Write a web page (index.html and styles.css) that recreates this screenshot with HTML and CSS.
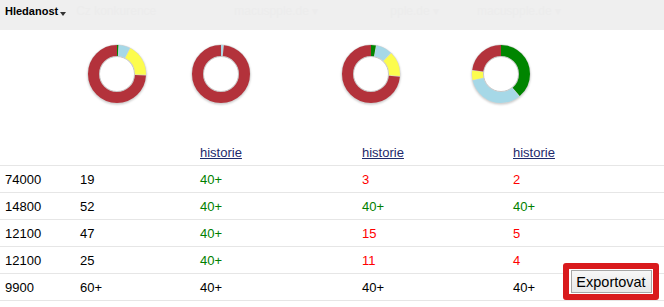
FILE: index.html
```html
<!DOCTYPE html>
<html>
<head>
<meta charset="utf-8">
<link rel="stylesheet" href="styles.css">
</head>
<body>
<div class="page">
  <div class="topbar">
    <span class="title">Hledanost</span><span class="caret"></span>
    <span class="ghost g1">Cz konkurence</span>
    <span class="ghost g2">macuspple.de ▾</span>
    <span class="ghost g3">pple.de ▾</span>
    <span class="ghost g4">macuspple.de ▾</span>
  </div>

  <div class="charts">
    <svg class="donut d1" width="62" height="62" viewBox="0 0 62 62">
      <circle class="rim" cx="31" cy="31" r="29.5"/>
      <circle class="hole" cx="31" cy="31" r="17.5"/>
      <g transform="rotate(-90 31 31)">
        <circle class="s green" cx="31" cy="31" r="23.5" stroke-dasharray="1.2 148" stroke-dashoffset="0"/>
        <circle class="s blue" cx="31" cy="31" r="23.5" stroke-dasharray="9 148" stroke-dashoffset="-1.7"/>
        <circle class="s yellow" cx="31" cy="31" r="23.5" stroke-dasharray="26.2 148" stroke-dashoffset="-11.2"/>
        <circle class="s red" cx="31" cy="31" r="23.5" stroke-dasharray="109.8 148" stroke-dashoffset="-37.9"/>
      </g>
    </svg>
    <svg class="donut d2" width="62" height="62" viewBox="0 0 62 62">
      <circle class="rim" cx="31" cy="31" r="29.5"/>
      <circle class="hole" cx="31" cy="31" r="17.5"/>
      <g transform="rotate(-90 31 31)">
        <circle class="s blue" cx="31" cy="31" r="23.5" stroke-dasharray="1.8 148" stroke-dashoffset="0"/>
        <circle class="s red" cx="31" cy="31" r="23.5" stroke-dasharray="145 148" stroke-dashoffset="-2.4"/>
      </g>
    </svg>
    <svg class="donut d3" width="62" height="62" viewBox="0 0 62 62">
      <circle class="rim" cx="31" cy="31" r="29.5"/>
      <circle class="hole" cx="31" cy="31" r="17.5"/>
      <g transform="rotate(-90 31 31)">
        <circle class="s green" cx="31" cy="31" r="23.5" stroke-dasharray="4.1 148" stroke-dashoffset="0"/>
        <circle class="s blue" cx="31" cy="31" r="23.5" stroke-dasharray="12.9 148" stroke-dashoffset="-4.6"/>
        <circle class="s yellow" cx="31" cy="31" r="23.5" stroke-dasharray="20.4 148" stroke-dashoffset="-18"/>
        <circle class="s red" cx="31" cy="31" r="23.5" stroke-dasharray="108.7 148" stroke-dashoffset="-38.9"/>
      </g>
    </svg>
    <svg class="donut d4" width="62" height="62" viewBox="0 0 62 62">
      <circle class="rim" cx="31" cy="31" r="29.5"/>
      <circle class="hole" cx="31" cy="31" r="17.5"/>
      <g transform="rotate(-90 31 31)">
        <circle class="s green" cx="31" cy="31" r="23.5" stroke-dasharray="56.9 148" stroke-dashoffset="0"/>
        <circle class="s blue" cx="31" cy="31" r="23.5" stroke-dasharray="47.2 148" stroke-dashoffset="-57.4"/>
        <circle class="s yellow" cx="31" cy="31" r="23.5" stroke-dasharray="7.8 148" stroke-dashoffset="-105.1"/>
        <circle class="s red" cx="31" cy="31" r="23.5" stroke-dasharray="34.3 148" stroke-dashoffset="-113.4"/>
      </g>
    </svg>
  </div>

  <table class="grid">
    <colgroup>
      <col class="c1"><col class="c2"><col class="c3"><col class="c4"><col>
    </colgroup>
    <tr><td></td><td></td><td><a href="#">historie</a></td><td><a href="#">historie</a></td><td><a href="#">historie</a></td></tr>
    <tr><td>74000</td><td>19</td><td class="ok">40+</td><td class="bad">3</td><td class="bad">2</td></tr>
    <tr><td>14800</td><td>52</td><td class="ok">40+</td><td class="ok">40+</td><td class="ok">40+</td></tr>
    <tr><td>12100</td><td>47</td><td class="ok">40+</td><td class="bad">15</td><td class="bad">5</td></tr>
    <tr><td>12100</td><td>25</td><td class="ok">40+</td><td class="bad">11</td><td class="bad">4</td></tr>
    <tr><td>9900</td><td>60+</td><td>40+</td><td>40+</td><td>40+</td></tr>
  </table>

  <div class="export-frame"><button class="export">Exportovat</button></div>
</div>
</body>
</html>
```

FILE: styles.css
```css
html, body {
  margin: 0;
  padding: 0;
  background: #fff;
}
body {
  font-family: "Liberation Sans", Arial, sans-serif;
  font-size: 13px;
  color: #000;
}
.page {
  position: relative;
  width: 664px;
  height: 307px;
  overflow: hidden;
}
.topbar {
  box-sizing: border-box;
  height: 30px;
  background: #efefef;
  padding: 4px 5px 0;
  display: flex;
  align-items: flex-start;
  line-height: 15px;
}
.title {
  font-weight: bold;
  font-size: 11px;
  color: #000;
}
.caret {
  width: 0;
  height: 0;
  margin: 8px 0 0 2px;
  border-left: 3.5px solid transparent;
  border-right: 3.5px solid transparent;
  border-top: 4px solid #333;
}
.ghost {
  font-size: 12px;
  color: #ececec;
}
.g1 { margin-left: 10px; }
.g2 { margin-left: 78px; }
.g3 { margin-left: 72px; }
.g4 { margin-left: 38px; }

.charts {
  box-sizing: border-box;
  height: 109px;
  padding-top: 13px;
  display: flex;
  align-items: flex-start;
}
.donut {
  display: block;
  filter: drop-shadow(0 1px 1px rgba(0, 0, 0, 0.22));
}
.d1 { margin-left: 86px; }
.d2 { margin-left: 42px; }
.d3 { margin-left: 88px; }
.d4 { margin-left: 68px; }
.rim { fill: #d4d4d4; }
.hole { fill: #fff; stroke: #c8c8c8; stroke-width: 1; }
.s { fill: none; stroke-width: 11; }
.red { stroke: #b3323b; }
.yellow { stroke: #fcfc4e; }
.blue { stroke: #a6d8e7; }
.green { stroke: #008500; }

.grid {
  width: 100%;
  border-collapse: collapse;
  table-layout: fixed;
}
.c1 { width: 75px; }
.c2 { width: 120px; }
.c3 { width: 162px; }
.c4 { width: 151px; }
.grid td {
  height: 26px;
  padding: 0 0 0 5px;
  border-bottom: 1px solid #e6e6e6;
  vertical-align: middle;
  line-height: 15px;
  white-space: nowrap;
}
.grid a {
  color: #1d2a6c;
  text-decoration: underline;
}
.ok { color: #007f00; }
.bad { color: #ff0000; }

.export-frame {
  position: absolute;
  left: 563px;
  top: 263px;
  box-sizing: border-box;
  width: 96px;
  height: 37px;
  border: 6px solid #d91a1d;
  border-radius: 3px;
  background: #fff;
  display: flex;
  align-items: center;
  justify-content: center;
}
.export {
  box-sizing: border-box;
  width: 81px;
  height: 23px;
  padding: 0;
  margin: 0;
  border: 1px solid #a6a6a6;
  border-radius: 0;
  background: linear-gradient(#f7f7f7, #e8e8e8);
  font-family: "Liberation Sans", Arial, sans-serif;
  font-size: 14.5px;
  color: #000;
  line-height: 20px;
}
```
